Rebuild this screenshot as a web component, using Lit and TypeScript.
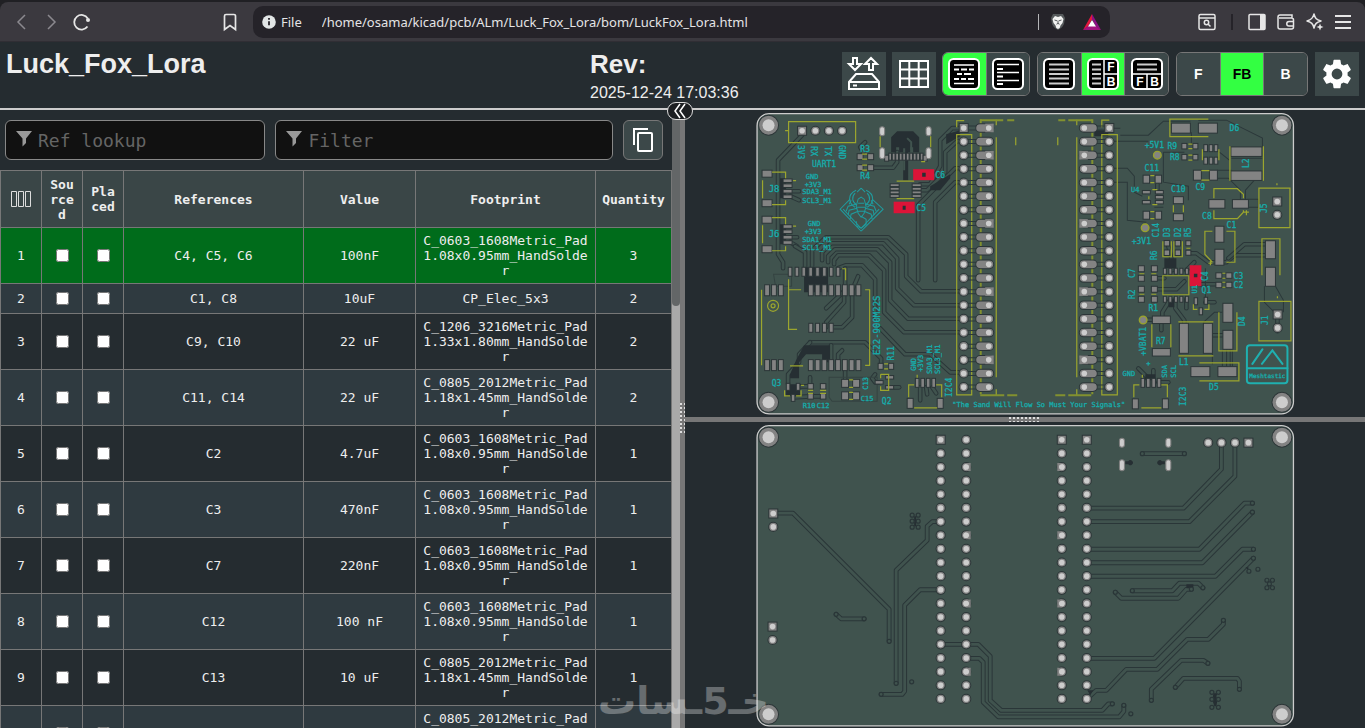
import { LitElement, html, css, svg } from "lit";
import { customElement } from "lit/decorators.js";

type Pt = [number, number];

/* ---------- drawing helpers for the board ---------- */
const tracks = (list: string[], w = 5) => list.map((d) => svg`
  <path class="trk-o" stroke-width=${w} d=${d}></path><path class="trk-i" stroke-width=${w - 2} d=${d}></path>`);
const via = (x: number, y: number) => svg`<circle class="via" cx=${x} cy=${y} r="2"></circle>`;
const pads = (list: number[][]) => list.map(([x, y, w, h]) => svg`
  <rect class="pad" x=${x - w / 2} y=${y - h / 2} width=${w} height=${h}></rect>`);
const th = (x: number, y: number, square = false) => svg`
  ${square
    ? svg`<rect class="pad" x=${x - 4.5} y=${y - 4.5} width="9" height="9"></rect>`
    : svg`<circle class="pad" cx=${x} cy=${y} r="4.6"></circle>`}
  <circle class="hole" cx=${x} cy=${y} r="2.8"></circle>`;
const slot = (x: number, y: number, h: number) => svg`
  <rect class="slot" x=${x - 2.5} y=${y - h / 2} width="5" height=${h} rx="2.5"></rect>`;
const corner = (x: number, y: number) => svg`
  <circle class="pad" cx=${x} cy=${y} r="10"></circle><circle class="hole" cx=${x} cy=${y} r="6"></circle>`;
const ring = (x: number, y: number) => svg`
  <circle class="ring" cx=${x} cy=${y} r="3.8"></circle>`;
const label = (t: string, x: number, y: number, s = 9) => svg`
  <text class="lbl" x=${x} y=${y + s * 0.36} font-size=${s}>${t}</text>`;
const vlabel = (t: string, x: number, y: number, s = 9, a = -90) => svg`
  <text class="lbl" transform="translate(${x} ${y}) rotate(${a})" y=${s * 0.36} font-size=${s}>${t}</text>`;

const N20 = Array.from({ length: 20 }, (_, i) => i);
const range = (x0: number, n: number, step: number) => Array.from({ length: n }, (_, i) => x0 + i * step);

const frontTracks = [
  "M802 135 L778 160 V254 L783 262 V268",
  "M871 167.5 H893 L897 162 V152", "M863 152 L860 147 L865 142",
  "M790 191 H799 M790 196 L799 200 M790 237 H797 M790 242 L797 246",
  "M963 128 H952 L940 140 V166 L930 184 H920",
  "M963 141 H957 L945 152 V172 L927 190 H920",
  "M963 168 H955 L918 205 V280", "M963 182 H955 L935 202 V280",
  "M822 260 V252 L831 243 H883 L897 258 V288 L914 305 H962",
  "M828 262 V256 L835 249 H877 L890 262 V300 L908 318.5 H962",
  "M834 264 V260 L838 255 H869 L884 270 V312 L904 332 H962",
  "M795 246 L805 252 V268", "M812 268 V250 L826 237 H888 L906 254 V276 L921 291 H962",
  "M838 268 L846 265 H862 L875 279 V318",
  "M880 328 L905 354 H930 L950 372 H962", 
  "M826 308 L845 290 V268", "M844 290 V302 L826 322 V327", "M832 327 H842 L852 317 V290 L858 276",
  "M810 342 H865 L881 358 V366", "M831 345 V362", "M838 362 V354 L842 350",
  "M788 384 V374 L799 362 V354 L810 342",
  "M845 369 V380", "M879 382 H875 L872 378 L875 374", "M889 387 H899",
  "M793 397 L810 396 H823 M798 386 H810 V377",
  "M920 387 V400 M926 387 L927 394 M932 387 L936 393",
  "M1157 184 V192",
  "M1168 246 L1172 262 V270", "M1188 253 H1196 L1208 262 H1226 L1234 255 H1265",
  "M1228 258 L1244 244 H1265",
  "M1154 289 H1176 L1184 281", "M1154 278 H1164",
  "M1175 299 V308 L1184 320 V330", "M1170 299 L1162 312 V320", "M1186 299 V308",
  "M1200 284 H1218", "M1205 302 H1214",
  "M1186 270 L1194 262", "M1212 335 H1225", "M1228 350 V368",
  "M1143 319.5 H1152", "M1161 323 V330", "M1158 382 H1168", "M1148 378 L1138 368", "M1153 378 V370",
  "M1277 331 V314",
];
const thinTracks = [
  "M1113 128 H1120 M1113 141 H1148 M1120 135 H1148 L1163 121 H1190 M1113 168 H1127 L1134 176 V192 L1142 196",
  "M1113 182 H1127 V220 L1146 222 M1191 132 V145 M1163 152 V182 L1188 186 V200 M1163 152 H1184",
  "M1198 120 H1226 L1262 138 V147 M1219 152 L1229 160 M1217 170 H1231 M1217 178 H1228 L1240 190 V200",
  "M1246 199 H1258 V207 H1248 M1254 180 L1245 190 V200",
  "M1231 158 H1262 M1264 286 V302 L1274 312 M1275 286 L1283 300 V312 M1212 353 V364",
  "M1203 322 L1214 312 H1222 M1222 350 V366 M1232 350 V366 M1205 268 V300 M1154 207 H1163",
];

const FRONT_PADS: number[][] = [
  [767, 173.5, 10, 7], [767, 203, 10, 7], [767, 219.5, 10, 7], [767, 249, 10, 7],
  ...[180.5, 185.5, 191, 196.5].map((y) => [787.5, y, 9, 3.6]),
  ...[226.3, 231.5, 237, 242.3].map((y) => [787.5, y, 9, 3.6]),
  [860, 156.5, 6, 6], [870.5, 156.5, 6, 6], [860, 167.5, 6, 6], [870.5, 167.5, 6, 6],
  ...range(890, 10, 3.5).map((x) => [x, 156.5, 2.8, 7]), [886.5, 158, 4, 6], [925, 158, 4, 6],
  ...[185, 188.6, 192.2, 195.8].flatMap((y) => [[894.5, y, 9, 2.8], [916.5, y, 9, 2.8]]),
  ...range(790, 8, 6.85).map((x) => [x, 271.5, 3.6, 9]),
  ...[290, 364.8].flatMap((y) => [...range(767, 3, 6.9), ...range(810.7, 8, 6.8)].map((x) => [x, y, 4.8, 11])),
  ...range(810.7, 4, 6.8).map((x) => [x, 327.5, 4, 9]),
  [880.5, 366, 5, 6], [891, 366, 5, 6], [879, 382, 8, 3.5], [889.5, 377, 8, 3.5], [889.5, 387, 8, 3.5],
  [845, 383, 7, 8], [856, 383, 7, 8], [845, 395.5, 7, 8], [856, 395.5, 7, 8],
  [810.5, 386, 5.5, 5.5], [810.5, 396, 5.5, 5.5], [823, 386, 5.5, 5.5], [823, 396, 5.5, 5.5],
  [788, 386.5, 3.6, 7], [798, 386.5, 3.6, 7], [793, 397.5, 3.6, 7],
  ...range(917, 4, 5.5).map((x) => [x, 382.5, 3.6, 9]), [910, 403, 6, 10], [940, 403, 6, 10],
  [1180.5, 128, 19, 10], [1207.5, 128, 19, 10],
  [1184, 146, 5, 5.5], [1195, 146, 5, 5.5], [1184, 157, 5, 5.5], [1195, 157, 5, 5.5],
  ...[1205.3, 1210.6, 1215.6].flatMap((x) => [[x, 148, 3.6, 7], [x, 160.5, 3.6, 7]]),
  [1246, 151.5, 31, 9.5], [1246, 175.5, 31, 9.5],
  [1197, 175, 8, 10], [1213, 175, 8, 10],
  [1146, 179, 6.5, 8], [1158, 179, 6.5, 8], [1146, 215, 6.5, 8], [1158, 215, 6.5, 8],
  [1146, 192, 8, 3.4], [1146, 202, 8, 3.4], [1159, 192, 8, 3.4], [1159, 197, 8, 3.4], [1159, 202, 8, 3.4],
  [1178, 200, 10, 7], [1178, 217, 10, 7],
  [1166.5, 243, 5.5, 5.5], [1166.5, 252.5, 5.5, 5.5], [1177.5, 243, 5.5, 5.5], [1177.5, 252.5, 5.5, 5.5],
  [1188, 243, 5, 5], [1188, 252.5, 5, 5],
  [1216.5, 203.7, 16, 8.6], [1240, 203.7, 16, 8.6],
  [1219, 234, 9, 16], [1219, 257, 9, 16], [1270, 249.5, 10, 18], [1270, 276.5, 10, 19],
  [1141, 268.5, 6, 6], [1141, 278, 6, 6], [1154, 268.5, 6, 6], [1154, 278, 6, 6],
  [1141, 289, 6, 6], [1141, 299, 6, 6], [1154, 289, 6, 6], [1154, 299, 6, 6],
  ...range(1164.5, 5, 5.5).flatMap((x) => [[x, 271, 3, 6], [x, 299, 3, 6]]),
  [1195.5, 301, 3.4, 7], [1205.5, 300.5, 3.4, 7], [1200.5, 311, 3.4, 7],
  [1218.5, 275.3, 6, 5.5], [1228.5, 275.3, 6, 5.5], [1218.5, 284.7, 6, 5.5], [1228.5, 284.7, 6, 5.5],
  [1161, 319.5, 18, 7.5], [1161, 352, 18, 7.5], [1183.5, 338, 9, 30], [1207.5, 338, 9, 30],
  [1227.5, 312.5, 10, 19], [1227.5, 339.5, 10, 19], [1200, 371.3, 19, 10], [1227, 371.3, 19, 10],
  ...range(1142.5, 4, 5.4).map((x) => [x, 382.5, 3.6, 9]), [1135, 403.5, 6, 10], [1165, 403.5, 6, 10],
];

const frontSilk = `M788.5 121.5 H855.5 V142.5 H788.5 Z M785 130.5 h3
 M772 172 H785.5 V178 M762.5 180 V198 M772 204.5 H785.5 V200 M793 180.5 h3 M772 217.5 H785.5 V224 M762.5 225 V243 M772 250.5 H785.5 V246 M793 226 h3
 M880 136 V147 M930.5 136 V147 M921 161.5 h4 M862 154 h5 M862 159 h5 M862 165 h5 M862 170 h5
 M896.5 181 H914 M896.5 198.5 H914
 M761.5 289.5 V365 M869.5 289.5 V365 M865 289.5 h5 M865 365 h5 M788.5 279 V329 H797 M788.5 289.5 H801 M790 365.5 H803 M845.5 280 V268.5 H842
 M884 363.5 h4 M884 368.5 h4 M880.5 374 H888.5 V390 H880.5 V386 M880.5 378 V374 M849 379.5 h4 M849 387 h4 M849 392 h4 M849 399 h4
 M808 390 h5 M808 393 h5 M820 390 h6 M820 393 h6 M784.5 390 V395.5 H790 M796 395.5 H801 V390 M801 385 h3
 M908.5 397 V384.5 H914 M936 384.5 H941.5 V397 M914 407.5 H937 M917 374.5 v3
 M956.5 127 V120.5 H964 M956.5 134.5 H971.5 V394.5 H956.5 Z
 M996 137 V377 M1076.5 137 V377 M996 119.5 V125 M1076.5 119.5 V125 M996 389 v6 M1076.5 389 v6
 M1109 120 H1101.5 V127 M1101.5 134.5 H1117 V394.5 H1101.5 Z M1015.5 137 v8 M1057.5 137 v8
 M1208 119 H1169.5 V136.5 H1208 M1188 144 h4 M1188 148.5 h4 M1188 155 h4 M1188 160 h4 M1202 149 V160 M1218.5 149 V160
 M1229.5 146 V180.5 M1263 146 V180.5 M1201 170.5 H1209 M1201 180 H1209 M1150 175.5 h4 M1150 182.5 h4 M1150 211.5 h4 M1150 218.5 h4
 M1148.5 196 V199 M1152 189.5 h5 M1152 204.5 h5 M1173 205 V212 M1183 205 V212
 M1162.5 241 V256.5 H1171 V241 M1173.5 241 V256.5 H1182 V241 M1186 248 h4
 M1213.5 198 V188.5 H1237 L1243 194 V198 M1213.5 210 V218.5 H1237 L1243 212 V210 M1243.5 212 h5 M1246 210 v5
 M1258.5 188 H1289.5 V227.5 H1258.5 Z M1276.5 183 v2 M1212 231 H1204.5 V254 L1212 262 M1226 231 H1234.5 V262 H1226 M1208 263 h4 M1210 261 v4
 M1261.5 275 V238.5 H1279.5 V275 M1277 296 v2
 M1162.5 275.5 H1188.5 V294.5 H1162.5 Z M1139 273.5 h5 M1151 273.5 h5 M1139 294 h5 M1151 294 h5 M1222 273 h3 M1222 278 h3 M1222 282 h3 M1222 287 h3
 M1193 304 V309 H1197 M1204 309 H1208.5 V304 M1151.5 324 V347 M1170.5 324 V347 M1178 321.5 H1213 M1178 355.5 H1213
 M1218.5 312 V350.5 H1236.5 V312 M1199 362.5 H1238.5 V380.5 H1199
 M1258.5 301 H1290.5 V340.5 H1258.5 Z M1133.5 397 V384.5 H1139 M1161 384.5 H1167 V397 M1141 407.5 H1161 M1142 374.5 v3`;

const frontBoard = () => svg`
  <rect class="board" x="757" y="113.5" width="536" height="300" rx="12"></rect>
  <g>${tracks(frontTracks, 4.6)}</g>
  <path class="thin" d=${thinTracks.join(" ")}></path>
  <path class="gap" d="M891 152 V137 L897 131 H913 L919 137 V152 H913 V147 H910 V152 H908 V180 H903 V152 H899 V147 H896 V152 Z
    M804 267 V292 H828 V267 Z M804 345 H830 V362 H822 V354 H806 L799 362 V378 H790 V374 L796 360 Z
    M780 178 h6 v20 h-6 z M780 224 h6 v20 h-6 z M786 384 h14 v12 h-14 z M946 134 l14 -4 v6 l-14 8 z M1094 130 h14 v6 h-14 z
    M1164 258 h12 v10 h-12 z M1168 299 h6 v8 h-6 z M930 186 l20 -12 v4 l-10 12 h-10 z M1145 374 h10 v6 h-10 z"></path>
  <path class="zone" d="M904 170 V148 M911 150 V142 L907 138"></path>
  <path class="frame" d="M773.5 274 h18 v12 h-16 z M829 377 h48 v24 h-45 l-3 -4 z"></path>
  <g>${pads(FRONT_PADS)}</g>
  <path class="silk" d=${frontSilk}></path>
  <path class="silk thick" d="M980.5 119 V394 M1092 119 V394"></path>
  <path class="silk thick" d="M980 120 H1003 M1007 120 H1014 M1058 120 H1065 M1068 120 H1092 M980 395 H1004 M1007 395 H1017 M1055 395 H1065 M1068 395 H1091"></path>
  ${N20.map((i) => {
    const y = 127.8 + i * 13.63;
    const sq = i % 5 === 2;
    return svg`
      <path class="link" d="M967 ${y - 2} H977 M967 ${y + 2} H977 M1096 ${y - 2} H1105 M1096 ${y + 2} H1105"></path>
      <rect class="pad" x="975.5" y=${y - 4.3} width="18" height="8.6" rx="4.3"></rect>
      <rect class="pad" x="1079" y=${y - 4.3} width="18" height="8.6" rx="4.3"></rect>
      ${i === 0 ? svg`<rect class="flat" x="985" y=${y - 4.3} width="8.5" height="8.6"></rect>` : ""}
      ${sq ? svg`<rect class="flat" x="985" y=${y - 4.3} width="8.5" height="8.6"></rect><rect class="flat" x="1079" y=${y - 4.3} width="8.5" height="8.6"></rect>` : ""}
      <circle class="hole" cx="988.5" cy=${y} r="2.8"></circle><circle class="hole" cx="1084" cy=${y} r="2.8"></circle>
      ${th(963.5, y, i === 0)}${th(1109, y, i === 0)}`;
  })}
  ${[802, 815.3, 828.8, 842].map((x, i) => th(x, 130.6, i === 0))}
  ${slot(882, 131, 9)}${slot(928.4, 131, 9)}${slot(882, 153, 11)}${slot(928.4, 153, 11)}
  ${th(1276.8, 201.3, true)}${th(1276.8, 214.6)}${th(1277.2, 314.2, true)}${th(1277.2, 327.6)}
  ${([[768.5, 125], [1281.5, 125], [768.5, 402], [1281.5, 402]] as Pt[]).map(([x, y]) => corner(x, y))}
  ${ring(1157, 155)}${ring(1144.8, 227.6)}${ring(1142.8, 319.7)}
  <circle class="silk" cx="773" cy="305.5" r="5.5"></circle><circle class="silk" cx="773" cy="305.5" r="2"></circle>
  <g class="hot">
    <rect x="913" y="169" width="21" height="11"></rect><rect x="893.5" y="201.5" width="21" height="11.5"></rect>
    <rect x="1189.3" y="265" width="11.7" height="20.8"></rect>
    <path class="gap" d="M922 172.5 h3.5 v4 h-3.5 z M902.5 205.5 h3 v4 h-3 z M1193.5 273.5 h3.5 v3.5 h-3.5 z"></path>
  </g>
  <g class="art">
    <path d="M861 231 L840 209 L850 199 M861 231 L883 209 L872 199 M861 228 L843 209 M861 228 L879 209 M851 200 l-2 4 M871 200 l2 4"></path>
    <path d="M861 188 L857 192 M861 188 L865 192 M856 190 C847 194 848 203 855 207 M866 190 C875 194 874 203 867 207 M855 193 C851 197 852 202 857 205 M867 193 C871 197 870 202 865 205"></path>
    <path d="M858 199 L861 197 L864 199 L866 206 L864 213 L861 217 L858 213 L856 206 Z M858 203 H864 M857 207 H865 M858 211 H864"></path>
    <path d="M856 204 L848 206 L846 211 M857 208 L849 210 L848 215 M858 211 L851 214 L850 219 M866 204 L874 206 L876 211 M865 208 L873 210 L874 215 M864 211 L871 214 L872 219"></path>
    <path d="M861 216 L866 219 L866 224 L861 228 L857 226 L856 221"></path>
  </g>
  <g class="mesh">
    <rect x="1246.5" y="345" width="40.5" height="38" rx="3"></rect>
    <path d="M1247 368 H1287 M1252 363.5 L1262 349 M1261.5 363.5 L1272 350 L1282 363.5"></path>
  </g>
  ${label("Meshtastic", 1267, 375.5, 6)}
  ${vlabel("3V3", 801, 152, 8, 90)}${vlabel("RX", 814, 151, 8, 90)}${vlabel("TX", 828, 151, 8, 90)}${vlabel("GND", 842, 152, 8, 90)}
  ${label("UART1", 824, 163.5, 8)}${label("R3", 865, 148.5, 8)}${label("R4", 865, 175.5, 8)}
  ${label("J8", 774, 189)}${label("J6", 774, 234)}
  ${label("GND", 812, 176, 7)}${label("+3V3", 813, 184, 7)}${label("SDA3_M1", 817, 191.5, 7)}${label("SCL3_M1", 817, 200.5, 7)}
  ${label("GND", 814, 223, 7)}${label("+3V3", 813, 231, 7)}${label("SDA1_M1", 817, 239, 7)}${label("SCL1_M1", 817, 247.5, 7)}
  ${label("C6", 940, 175, 8)}${label("C5", 921, 207.5, 8)}
  ${vlabel("E22-900M22S", 877, 325)}${vlabel("R11", 890.5, 353, 8)}${label("Q2", 886.5, 401, 8)}${label("Q3", 776.5, 383, 8)}
  ${vlabel("C13", 865, 383, 7)}${label("C15", 867, 398, 7)}${label("R10", 809, 405, 7)}${label("C12", 823, 405, 7)}
  ${vlabel("I2C4", 949, 387, 8)}${vlabel("GND", 913, 364, 7)}${vlabel("+3V3", 920.5, 363, 7)}${vlabel("SDA3_M1", 929, 359, 7)}${vlabel("SCL3_M1", 937.5, 359, 7)}
  ${label('"The Sand Will Flow So Must Your Signals"', 1038.5, 404, 7)}
  ${label("D6", 1234, 128, 8)}${label("R9", 1172, 145.5, 8)}${label("R8", 1174.5, 156.5, 8)}${label("+5V1", 1154, 145, 8)}
  ${label("C11", 1151.5, 168, 8)}${vlabel("L2", 1246, 163, 8)}${label("C9", 1200, 186.5, 8)}${label("U4", 1135, 189, 7)}
  ${label("C10", 1178, 189, 8)}${vlabel("C14", 1156, 230, 8)}${label("+3V1", 1141, 241, 8)}
  ${vlabel("D3", 1167, 232, 8)}${vlabel("D2", 1178, 232, 8)}${vlabel("R5", 1188, 232, 8)}${vlabel("R6", 1154, 255, 8)}
  ${label("C8", 1206.5, 216, 8)}${vlabel("J5", 1264, 208, 8)}${label("C1", 1231, 225, 8)}
  ${vlabel("C7", 1132, 273, 8)}${vlabel("R2", 1132, 294, 8)}${label("R1", 1153, 308, 8)}${vlabel("C4", 1205, 276, 8)}
  ${vlabel("U1", 1194.5, 289, 7)}${label("Q1", 1206, 290, 8)}${label("C3", 1238, 275.5, 8)}${label("C2", 1238, 285, 8)}
  ${vlabel("+VBAT1", 1143, 341, 8)}${label("R7", 1160.5, 341, 8)}${label("L1", 1183.5, 362, 8)}${vlabel("D4", 1242, 321, 8)}
  ${label("D5", 1213.5, 387, 8)}${vlabel("J1", 1265, 320, 8)}${vlabel("I2C3", 1182.5, 396, 8)}
  ${label("GND", 1128.5, 373, 7)}${vlabel("SDA", 1164.5, 371, 7)}${vlabel("SCL", 1173, 371, 7)}${label("+", 1148, 363, 7)}`;

const backTracks = [
  "M778 513 H793 L889 609 V641", "M940 521.5 H932 L927 526 V540 L896 570 V683",
  "M940 589.5 H920 L904.5 605 V691 L902 694 H881", "M836 614 L841 618.5 H864",
  "M940 644 H978 L990 656 V700 L1001 710 H1102 L1108 703.5 H1112",
  "M966 658 H979 L983 662 V702 L998 716.5 H1119 L1123.5 711 V705",
  "M1086 508 H1183 L1221 469 V443", "M1086 521.5 H1189 L1234.5 476 V443",
  "M1086 549 H1199 L1244 503 H1252", "M1086 562.5 H1202 L1252 512",
  "M1086 576 H1215 L1242 549 H1253", "M1086 658 H1154 L1253 558",
  "M1132 590.5 H1172 L1179 583 H1198 L1202.5 587.5", "M1115 592 L1121 598 H1178 L1186 589 H1191",
  "M1086 699 L1096 690 H1106 L1126 669 H1157 L1187 639 H1208 L1223 624 V620",
  "M1151 700 V689 L1181 660 H1203 L1207.5 663", "M1175 687 L1183 678 H1237 L1239 681 V689",
  "M1142 453.5 H1184",
];
const backEnds: Pt[] = [[889, 641], [896, 683], [881, 694], [836, 614], [864, 618.5], [1112, 703.5], [1123.5, 705],
  [1252, 503], [1252, 512], [1253, 549], [1253, 558], [1132, 590.5], [1202.5, 587.5], [1115, 592], [1191, 589],
  [1223, 620], [1151, 700], [1207.5, 663], [1175, 687], [1239, 689], [1142, 453.5], [1184, 453.5],
  [911.5, 681.5], [1130.5, 713.5], [1248.5, 571], [1257.5, 569],
  [1266.5, 580], [1272, 580], [1269, 583.7], [1266.5, 587.5], [1272, 587.5],
  ...[515, 521, 527].flatMap((y) => [[912, y], [918, y]] as Pt[]),
  ...[692, 699, 707].flatMap((y) => [[1211.5, y], [1218, y]] as Pt[])];

const backBoard = () => svg`
  <rect class="board" x="757" y="425.5" width="536" height="300" rx="12"></rect>
  <g>${tracks(backTracks, 4.8)}</g>
  <path class="gap" d="M1125 461 h3 a2.5 2.5 0 1 1 0 3 h-3 z M1164.5 461 h-3 a2.5 2.5 0 1 0 0 3 h3 z M1186 584 h7 v4 h-7 z
    M914 516 h2 v10 h-2 z M1213 693 h4 l-1 3 1 4 -1 6 h-2 l-2 -6 z M1087 690 h6 l-3 5 z M1245 567 h3 v3 z"></path>
  ${backEnds.map(([x, y]) => via(x, y))}
  ${N20.map((i) => {
    const y = 439.6 + i * 13.63;
    const sq = i % 5 === 2;
    return svg`${th(940.5, y, i === 0)}${th(966, y)}${th(1061.5, y, i === 0)}${th(1086.5, y, i === 0)}
      ${sq ? svg`<path class="flat" d="M966 ${y - 4} h4.5 v8 h-4.5 z M1061.5 ${y - 4} h-4.5 v8 h4.5 z"></path>
      <circle class="hole" cx="966" cy=${y} r="2.8"></circle><circle class="hole" cx="1061.5" cy=${y} r="2.8"></circle>` : ""}`;
  })}
  ${th(773.2, 513.3, true)}${th(773.2, 526.7)}${th(772.5, 626.3, true)}${th(772.5, 639.7)}
  ${[1207.8, 1221.1, 1234.6, 1248].map((x, i) => th(x, 442.5, i === 3))}
  ${slot(1121.6, 442.5, 9)}${slot(1168, 442.5, 9)}${slot(1121.6, 465, 11)}${slot(1168, 465, 11)}
  ${([[768.5, 437], [1281.5, 437], [768.5, 714], [1281.5, 714]] as Pt[]).map(([x, y]) => corner(x, y))}`;

/* ---------- board view ---------- */
@customElement("board-view")
class BoardView extends LitElement {
  static properties = { side: { type: String } };
  declare side: string;
  static styles = css`
    :host { display: block; min-height: 0; overflow: hidden; }
    .canvas { display: block; width: 100%; height: 100%; }
    .board { fill: #40534e; stroke: #cccccc; stroke-width: 1.3; }
    .trk-o { fill: none; stroke: #2a3638; stroke-linecap: round; stroke-linejoin: round; }
    .trk-i { fill: none; stroke: #40534e; stroke-linecap: round; stroke-linejoin: round; }
    .thin, .link { fill: none; stroke: #2b383a; stroke-width: 1; }
    .gap { fill: #262f33; }
    .zone { fill: none; stroke: #40534e; stroke-width: 2; }
    .frame { fill: none; stroke: #344341; stroke-width: 1; }
    .via { fill: #40534e; stroke: #2a3638; stroke-width: 1.2; }
    .pad { fill: #838383; stroke: #2b3537; stroke-width: 1; }
    .flat { fill: #838383; }
    .hole, .slot { fill: #cdcdcd; }
    .slot { stroke: #7f7f7f; stroke-width: 1; }
    .silk { fill: none; stroke: #9ca62e; stroke-width: 1.2; }
    .thick { stroke-width: 2; stroke: #82912f; }
    .ring { fill: #838383; stroke: #98a22e; stroke-width: 1.4; }
    .lbl { fill: #16adac; stroke: #16adac; stroke-width: 0.3; font-family: "DejaVu Sans Mono", monospace; text-anchor: middle; }
    .hot { fill: #dc1438; }
    .art { fill: none; stroke: #1f9c9f; stroke-width: 1; }
    .mesh { fill: none; stroke: #1fb0b0; stroke-width: 2; stroke-linecap: round; }
  `;
  render() {
    const back = this.side === "back";
    return html`<svg class="canvas" role="img" aria-label=${back ? "Back side" : "Front side"}
      viewBox=${back ? "685 422 680 306" : "685 110 680 306"}>${back ? backBoard() : frontBoard()}</svg>`;
  }
}

/* ---------- browser toolbar ---------- */
@customElement("browser-bar")
class BrowserBar extends LitElement {
  static styles = css`
    :host { display: block; background: #202024; padding-top: 2px; }
    .bar { display: flex; align-items: center; height: 39px; background: #3b393f; border-bottom: 1px solid #302e34;
      border-radius: 8px 8px 0 0; padding: 0 12px; box-sizing: content-box; }
    button { all: unset; display: flex; color: #e6e6e6; }
    .dim { color: #8b898f; }
    .nav { display: flex; gap: 10px; flex: 0 0 208px; }
    .mark { flex: 0 0 33px; }
    .url { display: flex; align-items: center; flex: 1; height: 32px; border-radius: 10px; background: #252329;
      color: #e4e4e6; font: 13px/20px "Noto Sans", sans-serif; padding: 0 8px; white-space: nowrap; }
    .scheme { margin: 0 20px 0 4px; }
    .addr { all: unset; flex: 1; min-width: 0; }
    .sep { width: 1px; height: 16px; background: #b5b5b8; margin-right: 9px; }
    .lion { margin-right: 14px; }
    .tools { display: flex; align-items: center; gap: 8px; flex: 0 0 157px; justify-content: flex-end; margin-left: 86px; }
    .bar2 { width: 2px; height: 16px; background: #252329; margin: 0 6px; }
    svg { fill: none; stroke: currentColor; stroke-width: 1.5; display: block; }
  `;
  render() {
    return html`<div class="bar">
      <div class="nav">
        <button class="dim" aria-label="Back"><svg width="20" height="20"><path d="M13 3 L6 10 L13 17"></path></svg></button>
        <button class="dim" aria-label="Forward"><svg width="20" height="20"><path d="M6 3 L13 10 L6 17"></path></svg></button>
        <button aria-label="Reload"><svg width="20" height="20"><path stroke-width="1.8" d="M15.5 14.5 A7.3 7.3 0 1 1 15.8 6.5"></path><circle cx="16" cy="8" r="2" fill="currentColor" stroke="none"></circle></svg></button>
      </div>
      <button class="mark" aria-label="Bookmark"><svg width="20" height="20"><path stroke-width="1.7" d="M4.5 4 a1.5 1.5 0 0 1 1.5 -1.5 h8 a1.5 1.5 0 0 1 1.5 1.5 v13.5 l-5.5 -4 -5.5 4z"></path></svg></button>
      <div class="url">
        <svg width="16" height="16" stroke="none"><circle cx="8" cy="8" r="6.8" fill="#e2e6e6" stroke="none"></circle><path stroke="#252329" stroke-width="1.8" d="M8 7.2 v4 M8 4 v1.8"></path></svg>
        <span class="scheme">File</span>
        <input class="addr" aria-label="Address" value="/home/osama/kicad/pcb/ALm/Luck_Fox_Lora/bom/LuckFox_Lora.html">
        <span class="sep"></span>
        <svg class="lion" width="20" height="20"><path fill="#55595b" stroke="none" d="M5 2 h10 l2 4 -1 6 c-1 3 -4 5 -6 6 c-2 -1 -5 -3 -6 -6 l-1 -6z"></path><path fill="#f2f2f2" stroke="none" d="M7 4 l3 1 3 -1 2.500 3 -1 4 -2 2.500 -.8 2.500 -1.700 1 -1.700 -1 -.8 -2.500 -2 -2.500 -1 -4z"></path><path stroke="#55595b" stroke-width="1" d="M6.500 8 l2.500 .8 M13.500 8 l-2.500 .8 M10 8.500 v3 M8.500 12.200 l1.500 -.8 1.500 .8"></path></svg>
        <svg width="20" height="20"><path fill="#e3173e" stroke="none" d="M10 2 L1 18 L6 14.5 L10 7.5z"></path><path fill="#8b1184" stroke="none" d="M10 2 L19 18 L14 14.5 L10 7.5z"></path><path fill="#a0147e" stroke="none" d="M1 18 H19 L14 14 H6z"></path><path fill="#fff" stroke="none" d="M10 8 L14 14.5 H6z"></path></svg>
      </div>
      <div class="tools">
        <button aria-label="Find"><svg width="20" height="20"><rect x="2" y="2.5" width="16" height="15" rx="1.5"></rect><path d="M2 6 H18"></path><circle cx="9.5" cy="10.5" r="2.2"></circle><path d="M11 12 l2.5 2.5"></path></svg></button>
        <span class="bar2"></span>
        <button aria-label="Side panel"><svg width="20" height="20"><rect x="2" y="2.5" width="16" height="15" rx="1"></rect><path fill="currentColor" stroke="none" d="M13 3 h5 v14 h-5z"></path></svg></button>
        <button aria-label="Wallet"><svg width="22" height="20"><path d="M3 5 a2 2 0 0 1 2 -2 h12 v3 M3 5 v10 a2 2 0 0 0 2 2 h11.5 a2 2 0 0 0 2 -2 v-7 a2 2 0 0 0 -2 -2 H4"></path><path d="M18.5 9.5 h-4.5 a2 2 0 0 0 0 4.5 h4.5"></path></svg></button>
        <button aria-label="Assistant"><svg width="20" height="20"><path stroke-linejoin="round" d="M9 2 c1 4 2 5.5 7 7 c-4.5 1.5 -6 2.5 -7 7 c-1 -4.5 -2.5 -5.5 -7 -7 c4.5 -1.5 6 -3 7 -7z"></path><path fill="currentColor" stroke="none" d="M15 11.5 l1 2.5 2.5 1 -2.5 1 -1 2.5 -1 -2.5 -2.5 -1 2.5 -1z"></path></svg></button>
        <button aria-label="Menu"><svg width="20" height="20"><path stroke-width="1.8" d="M2 4 H18 M2 10 H18 M2 16 H18"></path></svg></button>
      </div>
    </div>`;
  }
}

const A = "C_0603_1608Metric_Pad1.08x0.95mm_HandSolder";
const B = "C_0805_2012Metric_Pad1.18x1.45mm_HandSolder";
const ROWS: [string, string, string, number][] = [
  ["C4, C5, C6", "100nF", A, 3],
  ["C1, C8", "10uF", "CP_Elec_5x3", 2],
  ["C9, C10", "22 uF", "C_1206_3216Metric_Pad1.33x1.80mm_HandSolder", 2],
  ["C11, C14", "22 uF", B, 2],
  ["C2", "4.7uF", A, 1],
  ["C3", "470nF", A, 1],
  ["C7", "220nF", A, 1],
  ["C12", "100 nF", A, 1],
  ["C13", "10 uF", B, 1],
  ["C15", "10 uF", B, 1],
];

const tile = (inner: unknown) => html`<svg width="34" height="34" viewBox="0 0 34 34">
  <rect x="2" y="2" width="30" height="30" rx="4.5" fill="#000" stroke="#fff" stroke-width="2"></rect>${inner}</svg>`;

@customElement("app-root")
class AppRoot extends LitElement {
  static styles = css`
    :host { display: flex; flex-direction: column; height: 100vh; overflow: hidden; position: relative;
      background: #252c30; color: #eeeeee; font-family: "Liberation Sans", Arial, sans-serif; }
    * { box-sizing: border-box; }
    .head { display: flex; align-items: flex-start; padding: 7px 6px 0; height: 68px; border-bottom: 2px solid #cccccc; }
    .name { flex: 1; min-width: 0; display: grid; grid-template-columns: 584px 1fr; }
    h1, h2 { margin: 0; font-size: 26px; line-height: 30px; font-weight: bold; }
    h1 { font-size: 27px; }
    .date { font-size: 16px; line-height: 18px; padding-top: 5px; }
    .menu { display: flex; gap: 6px; padding-top: 3px; }
    .menu button { width: 44px; height: 44px; padding: 0; border: 0; background: #3c4849; color: #fff;
      font: bold 14px "Liberation Sans", Arial, sans-serif; display: flex; align-items: center; justify-content: center; }
    .menu svg { display: block; fill: none; stroke: #fff; stroke-width: 2; }
    .seg { display: flex; height: 44px; border: 1px solid #777777; border-radius: 6px; overflow: hidden; margin-right: 1px; }
    .seg button { height: 42px; flex: 1; width: 43px; border-right: 1px solid #777777; }
    .seg button:last-child { border-right: 0; }
    .two { width: 88px; }
    .three { width: 132px; }
    .menu .on { background: #33ff42; color: #000; }
    .body { flex: 1; min-height: 0; display: flex; }
    .left { flex: 0 0 calc(50% - 3px); min-width: 0; display: flex; overflow: hidden; }
    .list { flex: 1; min-width: 0; }
    .track { flex: 0 0 8px; background: #a9a9a9; }
    .thumb { height: 196px; background: #636667; border-radius: 0 0 4px 4px; }
    .gutter { flex: 0 0 5px; background: #777777; display: flex; align-items: center; justify-content: center; }
    .dots { width: 5px; height: 32px; background:
      repeating-linear-gradient(90deg, transparent 0 2px, #777777 2px 4px),
      repeating-linear-gradient(#dddddd 0 2px, #777777 2px 4px); }
    .split { background: #777777; display: flex; align-items: center; justify-content: center; }
    .split .dots { width: 32px; height: 5px; }
    .right { flex: 1; min-width: 0; display: grid; grid-template-rows: 1fr 5px 1fr; }
    .search { display: flex; gap: 10px; padding: 10px 9px 10px 5px; }
    .box { display: flex; align-items: center; height: 40px; border: 1px solid #888888; border-radius: 6px; background: #111111;
      padding-left: 10px; gap: 6px; flex: 339 1 0; min-width: 0; }
    .box.ref { flex-grow: 259; }
    .box svg { flex: none; }
    .box input { flex: 1; min-width: 0; border: 0; outline: 0; padding: 0; background: none; color: #eee;
      font: 18px "DejaVu Sans Mono", monospace; }
    .box input::placeholder { color: #656565; opacity: 1; }
    .copy { flex: 0 0 40px; height: 40px; padding: 0; border: 1px solid #777777; border-radius: 6px; background: #3c4849;
      display: flex; align-items: center; justify-content: center; }
    table { width: 100%; table-layout: fixed; border-collapse: collapse; font: 13px/15px "DejaVu Sans Mono", monospace; }
    th, td { border: 1px solid #777777; padding: 5px; text-align: center; word-break: break-all; height: 30px; }
    th { background: #3a4647; height: 57px; }
    th.whole { word-break: normal; padding: 5px 0; }
    tr.long td { height: 56px; }
    tbody tr { background: #252c30; }
    tbody tr:nth-child(even) { background: #2f3a40; }
    tbody tr.sel { background: #006c1b; }
    input[type="checkbox"] { width: 13px; height: 13px; display: block; margin: 0 auto; }
    .c-s { width: 41px; } .c-l { width: 180px; } .c-v { width: 112px; } .c-q { width: 76px; }
    .cols { display: block; margin: 0 auto; }
    .fold { position: absolute; left: calc(50% - 16px); top: 102px; width: 26px; height: 18px; border-radius: 9px;
      border: 1px solid #dddddd; background: #1c1f22; padding: 0; display: flex; align-items: center; justify-content: center; }
    .stamp { position: absolute; left: 598px; bottom: 0; font: bold 38px/54px "DejaVu Sans", sans-serif; color: #ffffff;
      opacity: 0.3; direction: rtl; white-space: nowrap; pointer-events: none; }
  `;

  private funnel = html`<svg width="16" height="18" viewBox="0 0 16 18"><path fill="#999" d="M0 0 H16 L10 7.5 V12 L6.5 15.5 V7.5z"></path></svg>`;

  render() {
    return html`
      <browser-bar></browser-bar>
      <header class="head">
        <div class="name">
          <h1>Luck_Fox_Lora</h1>
          <div><h2>Rev:</h2><div class="date">2025-12-24 17:03:36</div></div>
        </div>
        <nav class="menu">
          <button aria-label="Save and load"><svg width="36" height="36"><path d="M7 2 h4 v6 h4 l-6 6 -6 -6 h4z M27 14 h-4 v-6 h-4 l6 -6 6 6 h-4z"></path><path d="M10 18 H26 L33 26 V33 H3 V26z M3 26 H33 M7 29.5 h4"></path></svg></button>
          <button aria-label="Statistics"><svg width="32" height="32"><path d="M2 3 H30 V29 H2z M2 11.5 H30 M2 20.5 H30 M11.3 3 V29 M20.7 3 V29"></path></svg></button>
          <div class="seg two">
            <button class="on" aria-label="Grouped">${tile(svg`<path stroke-width="1.5" d="M7 8 H27 M7 26.5 H27"></path><path d="M7 12.5 H12 M14 12.5 H20 M22 12.5 H27 M10 17 H15 M17 17 H24 M7 22 H12 M14 22 H19 M21 22 H27"></path>`)}</button>
            <button aria-label="Ungrouped">${tile(svg`<path stroke-width="1.3" d="M6 7.5 H28 M6 15.5 H28 M6 23.5 H28"></path><path d="M6 12 H12 M6 19.5 H12 M6 27 H12"></path>`)}</button>
          </div>
          <div class="seg three">
            <button aria-label="BOM only">${tile(svg`<path stroke="#ccc" stroke-width="1.8" d="M7 7.5 H27 M7 12.5 H27 M7 17 H27 M7 21.5 H27 M7 26.5 H27"></path>`)}</button>
            <button class="on" aria-label="BOM left, drawings right">${tile(svg`<path stroke="#ccc" stroke-width="1.8" d="M6 7.5 H15 M6 12.5 H15 M6 17 H15 M6 21.5 H15 M6 26.5 H15"></path><path d="M18 2 V32 M18 17 H32" stroke-width="1.5"></path><text x="25" y="14" text-anchor="middle" font-size="12" fill="#fff" stroke="none">F</text><text x="25" y="29" text-anchor="middle" font-size="12" fill="#fff" stroke="none">B</text>`)}</button>
            <button aria-label="BOM top, drawings bottom">${tile(svg`<path stroke="#ccc" stroke-width="1.8" d="M7 7.5 H27 M7 12.5 H27"></path><path d="M2 17 H32 M17 17 V32" stroke-width="1.5"></path><text x="10" y="29" text-anchor="middle" font-size="12" fill="#fff" stroke="none">F</text><text x="24.5" y="29" text-anchor="middle" font-size="12" fill="#fff" stroke="none">B</text>`)}</button>
          </div>
          <div class="seg three">
            <button>F</button><button class="on">FB</button><button>B</button>
          </div>
          <button aria-label="Settings"><svg width="34" height="34" viewBox="0 0 24 24"><path fill="#fff" stroke="none" d="M19.43 12.98c.04-.32.07-.64.07-.98s-.03-.66-.07-.98l2.11-1.65c.19-.15.24-.42.12-.64l-2-3.46c-.12-.22-.39-.3-.61-.22l-2.49 1c-.52-.4-1.08-.73-1.69-.98l-.38-2.65C14.46 2.18 14.25 2 14 2h-4c-.25 0-.46.18-.49.42l-.38 2.65c-.61.25-1.17.59-1.69.98l-2.49-1c-.23-.09-.49 0-.61.22l-2 3.46c-.13.22-.07.49.12.64l2.11 1.65c-.04.32-.07.65-.07.98s.03.66.07.98l-2.11 1.65c-.19.15-.24.42-.12.64l2 3.46c.12.22.39.3.61.22l2.49-1c.52.4 1.08.73 1.69.98l.38 2.65c.03.24.24.42.49.42h4c.25 0 .46-.18.49-.42l.38-2.65c.61-.25 1.17-.59 1.69-.98l2.49 1c.23.09.49 0 .61-.22l2-3.46c.12-.22.07-.49-.12-.64l-2.11-1.65zM12 15.8a3.8 3.8 0 1 1 0-7.6 3.8 3.8 0 0 1 0 7.6z"></path></svg></button>
        </nav>
      </header>
      <main class="body">
        <section class="left">
          <div class="list">
            <div class="search">
              <label class="box ref">${this.funnel}<input type="text" placeholder="Ref lookup" aria-label="Ref lookup"></label>
              <label class="box">${this.funnel}<input type="text" placeholder="Filter" aria-label="Filter"></label>
              <button class="copy" aria-label="Copy"><svg width="24" height="28" fill="none" stroke="#fff" stroke-width="2"><path d="M3 19 V3 H17"></path><rect x="7" y="7" width="14" height="18" rx="1"></rect></svg></button>
            </div>
            <table>
              <colgroup><col class="c-s"><col class="c-s"><col class="c-s"><col class="c-l"><col class="c-v"><col class="c-l"><col class="c-q"></colgroup>
              <thead><tr>
                <th><svg class="cols" width="20" height="16" fill="none" stroke="#ddd" aria-label="Columns"><path d="M.5 .5 h5 v15 h-5z M7.5 .5 h5 v15 h-5z M14.5 .5 h5 v15 h-5z"></path></svg></th>
                <th>Sourced</th><th>Placed</th><th>References</th><th>Value</th><th>Footprint</th><th class="whole">Quantity</th>
              </tr></thead>
              <tbody>${ROWS.map(([refs, val, fp, q], i) => html`
                <tr class="${i === 0 ? "sel" : ""} ${fp.length > 20 ? "long" : ""}">
                  <td>${i + 1}</td>
                  <td><input type="checkbox" aria-label="Sourced ${refs}"></td>
                  <td><input type="checkbox" aria-label="Placed ${refs}"></td>
                  <td>${refs}</td><td>${val}</td><td>${fp}</td><td>${q}</td>
                </tr>`)}
              </tbody>
            </table>
          </div>
          <div class="track"><div class="thumb"></div></div>
        </section>
        <div class="gutter"><div class="dots"></div></div>
        <section class="right">
          <board-view side="front"></board-view>
          <div class="split"><div class="dots"></div></div>
          <board-view side="back"></board-view>
        </section>
      </main>
      <button class="fold" aria-label="Collapse"><svg width="14" height="16" fill="none" stroke="#fff" stroke-width="1.5"><path d="M7 1 L2 8 L7 15 M12 1 L7 8 L12 15"></path></svg></button>
      <div class="stamp">خـ5ـسات</div>
    `;
  }
}
